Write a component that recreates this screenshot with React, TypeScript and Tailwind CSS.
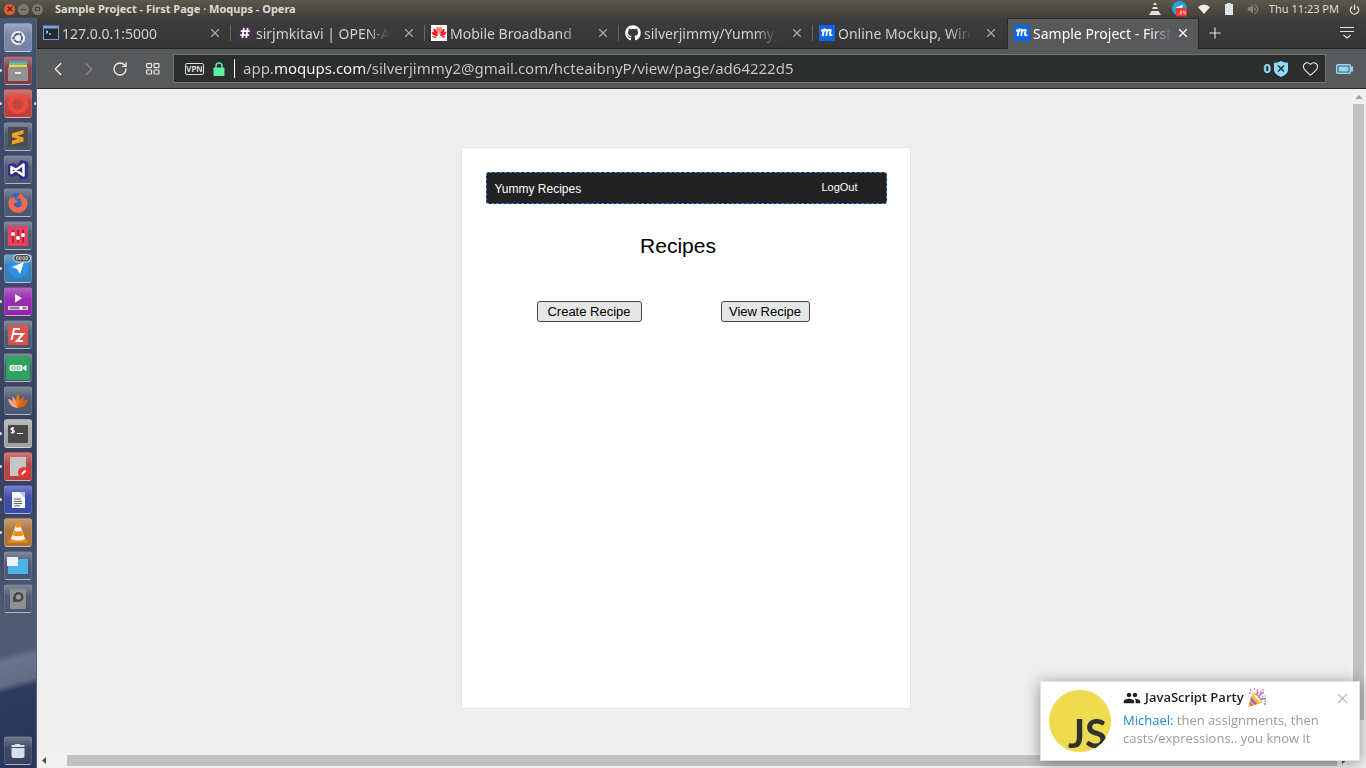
import type { ReactNode } from "react";
import { FaGithub, FaFirefoxBrowser } from "react-icons/fa";
import { MdPeople, MdVolumeUp } from "react-icons/md";
import { Heart, X, Plus, ChevronLeft, ChevronRight, RotateCw, Power } from "lucide-react";

type Tab = { title: string; icon: ReactNode; active?: boolean };
type Launcher = { label: string; tone: string; icon: ReactNode; running?: boolean; focused?: boolean };

const MoqupsIcon = () => (
  <svg viewBox="0 0 16 16" className="size-4 shrink-0">
    <rect width="16" height="16" fill="#0a66e8" />
    <path d="M2.2 5.9 4.8 4.6 3.7 11M4.6 6.6Q6.4 4.2 8.2 5L7.2 11M8 6.6Q9.8 4.2 11.7 5.1L10.9 9.4Q11 11 13.3 9.6" fill="none" stroke="#fff" strokeWidth="1.9" />
  </svg>
);

const tabs: Tab[] = [
  {
    title: "127.0.0.1:5000",
    icon: (
      <svg viewBox="0 0 16 16" className="size-4 shrink-0">
        <rect x=".5" y="1" width="15" height="13.5" fill="#22282c" stroke="#6aa0e8" />
        <path d="M0 1h16v2.5H0z" fill="#72a5e8" />
        <path d="M11 2.2h1M13 2.2h1.4" stroke="#e45b4b" />
        <path d="m3 5.5 2 1.5-2 1.5M6 9h2" fill="none" stroke="#fff" />
      </svg>
    ),
  },
  {
    title: "sirjmkitavi | OPEN-Andela",
    icon: (
      <svg viewBox="0 0 16 16" className="size-4 shrink-0">
        <rect width="16" height="16" fill="#4a3048" />
        <path d="M6.9 3 5.4 13M10.7 3 9.2 13M3.8 6.2h9M3.2 10h9" stroke="#fff" strokeWidth="1.7" />
      </svg>
    ),
  },
  {
    title: "Mobile Broadband",
    icon: (
      <svg viewBox="0 0 16 16" className="size-4 shrink-0">
        <rect width="16" height="16" fill="#fff" />
        <g fill="#f0191c">
          <path d="M7.6 9.8C5.5 7 4.8 4.6 5.5 2.5 7 1 8 2 7.9 4.5zM8.4 9.8c2.1-2.8 2.8-5.2 2.1-7.3C9 1 8 2 8.1 4.5z" fill="#f77567" />
          <path d="M7 10.4C4 9 2 6.8 2.5 3.5 5 4 6.5 7 7 10.4zM9 10.4c3-1.4 5-3.6 4.5-6.9C11 4 9.5 7 9 10.4z" />
          <path d="M6.8 11C3 11 .7 9.5.6 6.5 3 6.7 5.5 8.5 6.8 11zM9.2 11c3.8 0 6.1-1.5 6.2-4.5-2.4.2-4.9 2-6.2 4.5zM6.5 11.7C4.5 13.4 2.4 13.2 1.2 11zM9.5 11.7c2 1.7 4.1 1.5 5.3-.7z" />
        </g>
      </svg>
    ),
  },
  { title: "silverjimmy/Yummy_Recipes", icon: <FaGithub className="size-4 shrink-0 text-white" /> },
  { title: "Online Mockup, Wireframe", icon: <MoqupsIcon /> },
  { title: "Sample Project - First Page", icon: <MoqupsIcon />, active: true },
];

const glass = "bg-[#4a5670]";

const launchers: Launcher[] = [
  {
    label: "Dash",
    tone: "bg-[#7483a6]",
    icon: (
      <svg viewBox="0 0 20 20" className="size-5">
        <circle cx="10" cy="10" r="7" fill="#eef1f6" />
        <circle cx="10" cy="10" r="4" fill="none" stroke="#47536f" strokeWidth="1.8" />
        <circle cx="5.4" cy="10" r="1.6" fill="#47536f" stroke="#eef1f6" strokeWidth=".7" />
        <circle cx="12.5" cy="6" r="1.6" fill="#47536f" stroke="#eef1f6" strokeWidth=".7" />
        <circle cx="12.5" cy="14" r="1.6" fill="#47536f" stroke="#eef1f6" strokeWidth=".7" />
      </svg>
    ),
  },
  {
    label: "Files",
    tone: "bg-[#863945]",
    running: true,
    icon: (
      <svg viewBox="0 0 22 22" className="size-[22px]">
        <path d="M2 1h18v3H2z" fill="#549ed5" />
        <path d="M2 3h18v3H2z" fill="#75c46b" />
        <path d="M2 5h18v3H2z" fill="#f5cb55" />
        <rect x="1" y="7" width="20" height="14" rx="1" fill="#929292" />
        <path d="M8 13h6" stroke="#fff" strokeWidth="1.6" />
      </svg>
    ),
  },
  {
    label: "Opera",
    tone: "bg-[#bd3e3b]",
    running: true,
    focused: true,
    icon: (
      <svg viewBox="0 0 22 22" className="size-[22px]">
        <ellipse cx="11" cy="11" rx="7.8" ry="7.8" fill="none" stroke="#ee4a3c" strokeWidth="4.6" />
      </svg>
    ),
  },
  {
    label: "Sublime Text",
    tone: glass,
    icon: (
      <svg viewBox="0 0 20 20" className="size-5">
        <rect width="20" height="20" rx="1" fill="#4b4d4c" />
        <path d="M4 6.5 15.5 3v3.8L9 8.8l6.5 1.7v3.9L4 17.5v-3.8l6.2-2L4 10.2z" fill="#f9a125" />
      </svg>
    ),
  },
  {
    label: "Visual Studio",
    tone: glass,
    icon: (
      <svg viewBox="0 0 20 20" className="size-5">
        <path d="M0 5 5 3l4 2 4-5 7 2v16l-7 2-4-5-4 2-5-2z" fill="#352d80" />
        <path d="M3.5 7v6l12-8.5v11L3.5 7z" fill="none" stroke="#fff" strokeWidth="2.5" strokeLinejoin="round" />
      </svg>
    ),
  },
  {
    label: "Firefox",
    tone: glass,
    icon: (
      <span className="grid size-5 place-items-center rounded-full bg-[#3869b3]">
        <FaFirefoxBrowser className="size-5 text-[#f26b4a]" />
      </span>
    ),
  },
  {
    label: "Mixer",
    tone: glass,
    icon: (
      <svg viewBox="0 0 20 20" className="size-5">
        <rect width="20" height="20" rx="1" fill="#e9405e" />
        <path d="M5 4v13M10 4v13M15 4v13" stroke="#9d2945" strokeWidth="1.8" />
        <g fill="#fff">
          <circle cx="5" cy="8" r="2" />
          <circle cx="10" cy="12" r="2" />
          <circle cx="15" cy="9" r="2" />
        </g>
      </svg>
    ),
  },
  {
    label: "Telegram",
    tone: "bg-[#397cb0]",
    running: true,
    icon: (
      <svg viewBox="0 0 28 28" className="-mt-px size-7">
        <circle cx="13.5" cy="14" r="10" fill="#2c94e8" />
        <path d="m7 13 12-5-4 12-3-5z" fill="#fff" />
        <rect x="8.5" y=".5" width="17" height="7.5" rx="3.7" fill="#4c4c4c" stroke="#e4e4e4" />
        <path d="M11.5 2.7h1.6v3h-1.6zM14.5 2.7h1.6v3h-1.6zM18 2.7h1.6v3H18zM21 2.7h1.6v3H21z" fill="none" stroke="#ccc" strokeWidth=".8" />
      </svg>
    ),
  },
  {
    label: "Video player",
    tone: "bg-[#9324ac]",
    running: true,
    icon: (
      <svg viewBox="0 0 22 22" className="size-[22px]">
        <path d="m8 3 7 4.2-7 4.2z" fill="#fff" />
        <path d="M1 15h20v4H1z" fill="#c8c8c8" />
        <path d="M3 17h16" stroke="#681d77" />
        <circle cx="14" cy="17" r="1.7" fill="#fff" />
      </svg>
    ),
  },
  {
    label: "FileZilla",
    tone: glass,
    icon: (
      <svg viewBox="0 0 20 20" className="size-5">
        <rect width="20" height="20" rx="1" fill="#da534b" />
        <path d="M3.5 15 6 4h6M5 9h5M9 9h6l-6 7h6" fill="none" stroke="#fff" strokeWidth="2" />
      </svg>
    ),
  },
  {
    label: "Screen recorder",
    tone: glass,
    icon: (
      <svg viewBox="0 0 24 24" className="size-6">
        <rect width="24" height="24" rx="2" fill="#2da45d" />
        <path d="M4 9.5h12v5H4zM17 12l3-2.5v5z" fill="#fff" stroke="#fff" />
        <circle cx="7.5" cy="12" r="1.6" fill="none" stroke="#2da45d" />
        <circle cx="12.5" cy="12" r="1.6" fill="none" stroke="#2da45d" />
      </svg>
    ),
  },
  {
    label: "Leaf",
    tone: glass,
    icon: (
      <svg viewBox="0 0 22 22" className="size-[22px]">
        <path d="M11 18C5 18 2 14 1 9c5 1 8 4 10 9z" fill="#f4a486" />
        <path d="M11 18c6 0 9-4 10-9-5 1-8 4-10 9z" fill="#d9600f" />
        <path d="M11 18C7 15 5 11 5 6c4 3 6 7 6 12z" fill="#f4946c" />
        <path d="M11 18c4-3 6-7 6-12-4 3-6 7-6 12z" fill="#e06a14" />
        <path d="M11 18C8.500 13 8.500 8 11 3.500c2.500 4.500 2.500 9.500 0 14.500z" fill="#f07c1e" />
      </svg>
    ),
  },
  {
    label: "Terminal",
    tone: "bg-[#a0a2a4]",
    running: true,
    icon: (
      <svg viewBox="0 0 20 20" className="size-5">
        <rect width="20" height="18" y="1" rx="1" fill="#484848" />
        <path d="M6 4.200H3.700Q2.500 5 3.500 5.800L5.800 6.600Q7 7.800 5.500 8.500H2.800M4.600 3v6.800M9 9.500h6" fill="none" stroke="#fff" strokeWidth="1.2" />
      </svg>
    ),
  },
  {
    label: "Document viewer",
    tone: "bg-[#b4413f]",
    running: true,
    icon: (
      <svg viewBox="0 0 22 22" className="size-[22px]">
        <path d="M3 1h16v19H3z" fill="#c5c5c5" />
        <circle cx="16.500" cy="16.500" r="5.500" fill="#ee3536" />
        <path d="m14.500 18.500 4-4" stroke="#fff" strokeWidth="2.200" />
      </svg>
    ),
  },
  {
    label: "Writer",
    tone: "bg-[#3a49a7]",
    running: true,
    icon: (
      <svg viewBox="0 0 20 20" className="size-5">
        <path d="M4 2h8l5 5v11H4z" fill="#fafafa" />
        <path d="m11 2 6 6V2z" fill="#bcc4f1" />
        <path d="M6 9h7M6 11.300h8M6 13.600h8M6 15.800h6" stroke="#56606c" />
      </svg>
    ),
  },
  {
    label: "VLC",
    tone: "bg-[#aa743a]",
    running: true,
    icon: (
      <svg viewBox="0 0 22 22" className="size-[22px]">
        <path d="M4 15h14l3 5.500H1z" fill="#fb8a05" />
        <path d="M9.500 1h3L18 17q-7 3.200-14 0z" fill="#f8f8f8" />
        <path d="M9.500 1h3l1.300 4q-2.800 1-5.600 0zM7 8.800q4 1.500 8 0l1.300 4.400q-5.300 2-10.600 0z" fill="#fb8a05" />
      </svg>
    ),
  },
  {
    label: "Desktop",
    tone: glass,
    icon: (
      <svg viewBox="0 0 22 22" className="size-[22px]">
        <path d="M1 4h20v15H1z" fill="#4bb3e8" />
        <path d="M0 2h11v9H0z" fill="#f1f1f1" />
      </svg>
    ),
  },
  {
    label: "Disk",
    tone: glass,
    icon: (
      <svg viewBox="0 0 20 20" className="size-5">
        <rect x="2" width="16" height="20" rx="1" fill="#8e8e8c" />
        <circle cx="10.500" cy="8" r="3.800" fill="#999" stroke="#484848" strokeWidth="2.400" />
        <path d="M6 12.700V8M5.500 12h4" stroke="#484848" strokeWidth="2" />
      </svg>
    ),
  },
];

const trash: Launcher = {
  label: "Trash",
  tone: "bg-[#34415f]",
  icon: (
    <svg viewBox="0 0 20 20" className="size-5">
      <path d="M7 3h5v1h4.500v2h-13V4H7zM3.500 7h13v8q0 2-2 2h-9q-2 0-2-2z" fill="#d8deeb" />
    </svg>
  ),
};

function LauncherButton({ item }: { item: Launcher }) {
  return (
    <button
      aria-label={item.label}
      className={`relative ml-1 grid h-[29px] w-7 shrink-0 place-items-center rounded-[3px] border border-white/10 border-b-white/40 bg-linear-to-b from-white/30 via-white/5 via-40% to-transparent ${item.tone}`}
    >
      {item.icon}
      {item.running && <span className="absolute top-3 -left-[5px] h-[3px] w-[2px] rounded-r-sm bg-white/80" />}
      {item.focused && <span className="absolute top-3 -right-[5px] h-[3px] w-[2px] rounded-l-sm bg-white/80" />}
    </button>
  );
}

function SystemBar() {
  return (
    <header className="flex h-[18px] shrink-0 items-center bg-linear-to-b from-[#5b574b] to-[#403f39] pr-[6px] pl-1 text-[#dfdbd2]">
      <div className="flex gap-[3px]">
        <button aria-label="Close window" className="grid size-[11px] place-items-center rounded-full bg-[#ea5b35] text-[#5a2413]">
          <X className="size-2" strokeWidth={4} />
        </button>
        <button aria-label="Minimize window" className="grid size-[11px] place-items-center rounded-full bg-[#7b786f]">
          <span className="h-px w-[5px] bg-[#45433d]" />
        </button>
        <button aria-label="Restore window" className="grid size-[11px] place-items-center rounded-full bg-[#7b786f]">
          <span className="h-1 w-[5px] border border-[#45433d]" />
        </button>
      </div>
      <h1 className="ml-3 text-[11px] font-bold">Sample Project - First Page · Moqups - Opera</h1>
      <div className="ml-auto flex items-center">
        <svg viewBox="0 0 12 14" className="mr-[11px] h-[14px] w-3" fill="#dfdfe0">
          <path d="M5 1h2l.7 2H4.300zM3.800 5h4.400l.7 2H3.100zM2.500 9h7l2.500 4H0z" />
        </svg>
        <svg viewBox="0 0 16 16" className="mr-[9px] size-4">
          <circle cx="7.500" cy="7.500" r="7.500" fill="#2a9fd9" />
          <path d="m3 7 8-3.500L10 7z" fill="#fff" />
          <rect x="4" y="7" width="11" height="8.500" rx="1" fill="#ef3434" />
          <path d="M5.500 13.500h1M8 10h2v1.500H8V13h2M13.500 10h-2v1.500h2V13h-2" stroke="#fff" strokeWidth=".6" fill="none" />
        </svg>
        <svg viewBox="0 0 14 12" className="mr-[13px] h-3 w-[14px]">
          <path d="M1 4q6-5 12 0L7 11z" fill="#eceef1" />
        </svg>
        <svg viewBox="0 0 10 12" className="mr-[12px] h-3 w-[10px]">
          <path d="M3 0h4v1h2v11H1V1h2z" fill="#dfe2e8" />
        </svg>
        <MdVolumeUp className="mr-[9px] size-[14px] text-[#85837c]" />
        <span className="text-[11px]">Thu 11:23 PM</span>
        <Power className="ml-[10px] size-[11px]" strokeWidth={3} />
      </div>
    </header>
  );
}

function TabStrip() {
  return (
    <div className="flex h-[31px] shrink-0 items-stretch border-b border-[#242526] bg-linear-to-b from-[#3d3d3d] to-[#353535]">
      {tabs.map((tab, i) => (
        <div
          key={tab.title}
          className={
            tab.active
              ? "-mb-px flex w-[192px] items-center border-x border-t border-[#2a2b2c] bg-[#58595b] pr-2 pb-[2px] pl-[6px] text-white"
              : "flex w-[194px] items-center pl-[6px] text-[#d0d0d0]"
          }
        >
          <button className="flex min-w-0 flex-1 items-center gap-[3px]">
            {tab.icon}
            <span className="w-[142px] overflow-hidden text-left text-[14px] whitespace-nowrap mask-[linear-gradient(to_right,#000_82%,transparent_98%)]">
              {tab.title}
            </span>
          </button>
          <button aria-label={`Close ${tab.title}`} className={tab.active ? "" : "mr-2 ml-[10px] text-[#aaa]"}>
            <X className="size-[14px]" strokeWidth={2} />
          </button>
          {!tab.active && <span className={i < 4 ? "h-4 w-px bg-[#666]" : "w-px"} />}
        </div>
      ))}
      <button aria-label="New tab" className="ml-[7px] text-[#e4e4e4]">
        <Plus className="size-[18px]" strokeWidth={1.5} />
      </button>
      <button aria-label="Tab menu" className="mr-3 ml-auto">
        <svg viewBox="0 0 14 14" className="size-[14px]" fill="none" stroke="#e4e4e4" strokeWidth="1.200">
          <path d="M0 1.500h14M0 5.500h14M3.500 9l3.500 3 3.500-3" />
        </svg>
      </button>
    </div>
  );
}

function Toolbar() {
  return (
    <div className="flex h-10 shrink-0 items-center border-b border-[#2b2c2d] bg-[#58595b] pr-[13px] pl-[10px] text-[#ececec]">
      <button aria-label="Back"><ChevronLeft className="size-[22px]" strokeWidth={1.5} /></button>
      <button aria-label="Forward" className="ml-[9px] text-[#858688]"><ChevronRight className="size-[22px]" strokeWidth={1.5} /></button>
      <button aria-label="Reload" className="ml-3"><RotateCw className="size-4" strokeWidth={2} /></button>
      <button aria-label="Speed dial" className="ml-[18px]">
        <svg viewBox="0 0 14 12" className="h-3 w-[14px]" fill="none" stroke="#e6e6e6" strokeWidth="1.200">
          <rect x=".6" y=".6" width="5" height="4" rx=".8" />
          <rect x="8" y=".6" width="5" height="4" rx=".8" />
          <rect x=".6" y="7" width="5" height="4" rx=".8" />
          <rect x="8" y="7" width="5" height="4" rx=".8" />
        </svg>
      </button>
      <div className="ml-[13px] flex h-[29px] min-w-0 flex-1 items-center border border-[#747577] bg-[#2c2e2d] pl-[11px]">
        <button className="h-3 w-[19px] rounded-[2px] border border-[#dcdcdc] text-center text-[8px] leading-[10px] font-semibold text-[#ececec]">VPN</button>
        <svg viewBox="0 0 12 14" className="ml-[9px] h-[14px] w-3">
          <path d="M3 6V4q0-3 3-3t3 3v2" fill="none" stroke="#5ff0a4" strokeWidth="1.400" />
          <rect x=".5" y="5.500" width="11" height="8.500" rx="1" fill="#5ff0a4" />
        </svg>
        <span className="ml-[9px] h-[19px] w-px bg-white" />
        <input
          aria-label="Address"
          defaultValue="app.moqups.com/silverjimmy2@gmail.com/hcteaibnyP/view/page/ad64222d5"
          className="ml-2 h-6 min-w-0 flex-1 bg-[linear-gradient(to_right,#c9c9c9_31px,#fff_31px,#fff_122px,#c9c9c9_122px)] bg-clip-text pb-[2px] text-[15px] text-transparent outline-none"
        />
        <button aria-label="Blocked ads" className="flex items-center gap-[3px] text-[13px] font-bold text-[#9bdcfd]">
          0
          <svg viewBox="0 0 14 16" className="h-4 w-[14px]">
            <path d="M0 1.800Q4 2 7 0q3 2 7 1.800V9q0 4-7 7-7-3-7-7z" fill="#93d9ff" />
            <path d="m4 4.500 6 6m0-6-6 6" stroke="#2c2e2d" strokeWidth="1.500" />
          </svg>
        </button>
        <button aria-label="Bookmark" className="mr-[6px] ml-[14px]"><Heart className="size-[17px]" strokeWidth={1.5} /></button>
      </div>
      <button aria-label="Battery saver" className="ml-[10px]">
        <svg viewBox="0 0 17 10" className="h-[10px] w-[17px]">
          <rect x=".7" y=".7" width="13.600" height="8.600" rx="1" fill="none" stroke="#93d9ff" strokeWidth="1.400" />
          <path d="M2.600 2.600h9.800v4.800H2.600zM15 2.500h2v5h-2z" fill="#93d9ff" />
        </svg>
      </button>
    </div>
  );
}

const recipeButton = "h-[21px] rounded-[3px] border border-[#444] bg-[#e6e6e6] text-[13px] leading-[17px] text-black";

function Mockup() {
  return (
    <section className="h-[562px] w-[450px] border border-[#e5e5e5] bg-white pt-6 pr-[23px] pl-6 font-['Liberation_Sans',sans-serif]">
      <nav className="flex h-8 justify-between rounded-[3px] border border-dashed border-[#2f84dc] bg-[#222] pr-7 pl-2 text-white">
        <a href="#home" className="mt-2 text-[12px] leading-4">Yummy Recipes</a>
        <a href="#logout" className="mt-[6px] text-[11px] leading-4">LogOut</a>
      </nav>
      <h2 className="mt-[30px] pr-4 text-center text-[21px] leading-6 text-black">Recipes</h2>
      <div className="mt-[43px] ml-[51px] flex gap-[79px]">
        <button className={`w-[105px] ${recipeButton}`}>Create Recipe</button>
        <button className={`w-[89px] ${recipeButton}`}>View Recipe</button>
      </div>
    </section>
  );
}

function Toast() {
  return (
    <aside className="fixed right-[6px] bottom-[7px] flex h-20 w-80 gap-3 border border-[#e3e3e3] bg-white pt-2 pr-2 pl-2 font-['Open_Sans',sans-serif] shadow-[0_2px_14px_rgba(0,0,0,0.4)]">
      <div className="flex size-[62px] shrink-0 items-end justify-end overflow-hidden rounded-full bg-[#eedb4f] pr-1 font-['Lato',sans-serif] text-[40px] leading-[38px] font-bold text-[#30322b]">
        JS
      </div>
      <div className="min-w-0 flex-1">
        <div className="flex h-4 items-center text-[#222]">
          <MdPeople className="mr-1 size-[18px]" />
          <strong className="text-[13px] font-semibold">JavaScript Party</strong>
          <svg viewBox="0 0 20 20" className="ml-[3px] size-5">
            <path d="m5 6 9 9L1 19z" fill="#fac036" />
            <path d="m4.200 9 6 7-2.500.8-4.500-4.600zM3 14l3.500 3.500-2 .6L2 15.500z" fill="#a16bb8" />
            <path d="M5 6q4-1 7 2.500t2 6.500" fill="none" stroke="#efac25" strokeWidth="1.200" />
            <path d="M9 7q3-2 1-5.500M12 10q0-5 5-5.500M13 12q3-2.500 6-.5" fill="none" stroke="#bc6bd0" strokeWidth="1.500" />
            <path d="M3 2h1.500M7 1h1M15 2h1.500M18 8h1M17 16h1.500" stroke="#e7576b" strokeWidth="1.500" />
            <path d="M13 4h1.500M2 5h1.500M15 8.500h1M17.500 13.500h1.500" stroke="#4f8ee9" strokeWidth="1.500" />
          </svg>
          <button aria-label="Dismiss" className="ml-auto text-[#b5b5b5]"><X className="size-[17px]" strokeWidth={1.5} /></button>
        </div>
        <p className="mt-[5px] text-[13px] leading-[18px] text-[#9a9a9a]">
          <span className="text-[#168acd]">Michael:</span> then assignments, then
          <br />
          casts/expressions.. you know it
        </p>
      </div>
    </aside>
  );
}

export default function App() {
  return (
    <div className="flex h-screen flex-col overflow-hidden font-['Noto_Sans',sans-serif]">
      <SystemBar />
      <div className="flex min-h-0 flex-1">
        <aside className="flex w-[37px] shrink-0 flex-col gap-1 border-r border-[#5a6172] bg-[linear-gradient(165deg,#4a5878_0%,#3d4a68_10%,#3f4b66_35%,#34405d_58%,#3b4763_68%,#4d5a72_78%,#505c73_84%,#69738a_85%,#626d84_88%,#2d3b5d_89%,#26355a_100%)] pt-[5px] pb-[3px]">
          {launchers.map((item) => (
            <LauncherButton key={item.label} item={item} />
          ))}
          <div className="mt-auto flex">
            <LauncherButton item={trash} />
          </div>
        </aside>
        <div className="flex min-w-0 flex-1 flex-col">
          <TabStrip />
          <Toolbar />
          <div className="flex min-h-0 flex-1">
            <main className="flex min-w-0 flex-1 justify-center bg-[#eee] pt-[58px] pr-[17px]">
              <Mockup />
            </main>
            <div className="flex w-[15px] flex-col items-center bg-[#f1f1f1]">
              <svg viewBox="0 0 14 15" className="h-[15px] w-[14px]"><path d="m3 10 4-4 4 4z" fill="#a3a3a3" /></svg>
              <div className="mb-[33px] w-[11px] flex-1 bg-[#c1c1c1]" />
            </div>
          </div>
          <div className="flex h-[15px] shrink-0 items-center bg-[#f1f1f1]">
            <svg viewBox="0 0 15 15" className="mr-[15px] size-[15px]"><path d="M9 4v7L5 7.500z" fill="#505050" /></svg>
            <div className="h-[11px] flex-1 bg-[#c1c1c1]" />
            <svg viewBox="0 0 15 15" className="mr-[14px] size-[15px]"><path d="M5 4v7l4-3.500z" fill="#505050" /></svg>
          </div>
        </div>
      </div>
      <Toast />
    </div>
  );
}
